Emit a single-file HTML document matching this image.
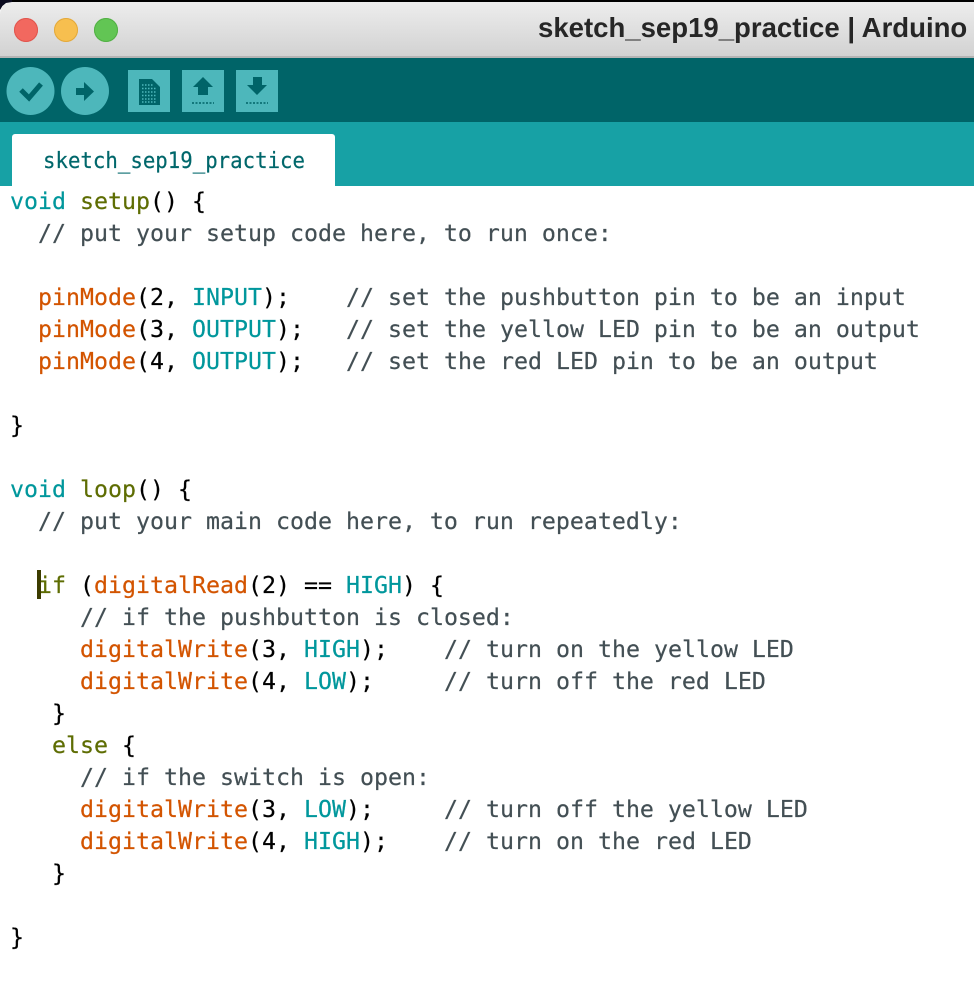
<!DOCTYPE html>
<html><head><meta charset="utf-8"><style>
html,body{margin:0;padding:0;background:#fff}
#w{position:relative;width:974px;height:992px;overflow:hidden;background:#fff}
.a{position:absolute}
#title{left:538px;top:12px;font:bold 27.55px/32px "Liberation Sans",sans-serif;color:#262626;white-space:pre}
#tab{left:43px;top:146px;font:22px/32px "DejaVu Sans Mono","Liberation Mono",monospace;color:#00676b;white-space:pre;-webkit-text-stroke:.2px #00676b;transform:scaleX(.942);transform-origin:0 0}
#code{left:10px;top:186px;font:23.25px/32px "DejaVu Sans Mono","Liberation Mono",monospace;color:#000;white-space:pre;margin:0;-webkit-text-stroke:.2px}
.k{color:#00979c}.s{color:#5e6d03}.f{color:#d35400}.c{color:#434f54}
</style></head><body><div id="w">
<div class="a" style="left:0;top:0;width:974px;height:2px;background:#000"></div>
<div class="a" style="left:0;top:2px;width:974px;height:54px;background:linear-gradient(#ededed,#d2d2d2);border-top-left-radius:12px"></div>
<div class="a" style="left:0;top:0;width:12px;height:10px;background:#0a0a1e;z-index:0;clip-path:polygon(0 0,100% 0,100% 20%,50% 30%,20% 60%,0 100%)"></div>
<div class="a" style="left:0;top:56px;width:974px;height:2px;background:#b4b4b4"></div>
<div class="a" style="left:14px;top:18px;width:24px;height:24px;border-radius:50%;background:#f2685f;box-shadow:inset 0 0 0 1px #e0564e"></div>
<div class="a" style="left:54px;top:18px;width:24px;height:24px;border-radius:50%;background:#f7bf4f;box-shadow:inset 0 0 0 1px #e3a93c"></div>
<div class="a" style="left:94px;top:18px;width:24px;height:24px;border-radius:50%;background:#62c554;box-shadow:inset 0 0 0 1px #52b045"></div>
<div class="a" id="title">sketch_sep19_practice | Arduino</div>
<div class="a" style="left:0;top:58px;width:974px;height:64px;background:#006468"></div>
<div class="a" style="left:0;top:122px;width:974px;height:64px;background:#17a1a5"></div>
<svg class="a" style="left:0;top:0" width="974" height="130" viewBox="0 0 974 130">
<circle cx="30.500" cy="91" r="24" fill="#4db7bb"/>
<circle cx="85" cy="91" r="24" fill="#4db7bb"/>
<path d="M21 90l8 8L41 84" fill="none" stroke="#006468" stroke-width="5"/>
<path d="M76 88h8v-6l10 9.500-10 9.500v-6h-8z" fill="#006468"/>
<rect x="128" y="70" width="42" height="42" fill="#4db7bb"/>
<rect x="182" y="70" width="42" height="42" fill="#4db7bb"/>
<rect x="236" y="70" width="42" height="42" fill="#4db7bb"/>
<path d="M139 79h13l8 8v18h-21z" fill="#006468"/>
<path d="M142 85h11M142 88.500h15M142 92h15M142 95.500h15M142 99h15M142 102h15" stroke="#4db7bb" stroke-width="1.500" stroke-dasharray="1.500 1.500" fill="none"/>
<path d="M203 77l10 10h-5v8h-10v-8h-5z" fill="#006468"/>
<path d="M192 103h22" stroke="#006468" stroke-width="1.500" stroke-dasharray="2 1.500"/>
<path d="M253 77h9v8h5l-10 10-10-10h6z" fill="#006468"/>
<path d="M246 103h22" stroke="#006468" stroke-width="1.500" stroke-dasharray="2 1.500"/>
</svg>
<div class="a" style="left:12px;top:134px;width:323px;height:52px;background:#fff;border-radius:3px 3px 0 0"></div>
<div class="a" id="tab">sketch_sep19_practice</div>
<pre class="a" id="code"><span class="k">void</span> <span class="s">setup</span>() {
  <span class="c">// put your setup code here, to run once:</span>

  <span class="f">pinMode</span>(2, <span class="k">INPUT</span>);    <span class="c">// set the pushbutton pin to be an input</span>
  <span class="f">pinMode</span>(3, <span class="k">OUTPUT</span>);   <span class="c">// set the yellow LED pin to be an output</span>
  <span class="f">pinMode</span>(4, <span class="k">OUTPUT</span>);   <span class="c">// set the red LED pin to be an output</span>

}

<span class="k">void</span> <span class="s">loop</span>() {
  <span class="c">// put your main code here, to run repeatedly:</span>

  <span class="s">if</span> (<span class="f">digitalRead</span>(2) == <span class="k">HIGH</span>) {
     <span class="c">// if the pushbutton is closed:</span>
     <span class="f">digitalWrite</span>(3, <span class="k">HIGH</span>);    <span class="c">// turn on the yellow LED</span>
     <span class="f">digitalWrite</span>(4, <span class="k">LOW</span>);     <span class="c">// turn off the red LED</span>
   }
   <span class="s">else</span> {
     <span class="c">// if the switch is open:</span>
     <span class="f">digitalWrite</span>(3, <span class="k">LOW</span>);     <span class="c">// turn off the yellow LED</span>
     <span class="f">digitalWrite</span>(4, <span class="k">HIGH</span>);    <span class="c">// turn on the red LED</span>
   }

}</pre>
<div class="a" style="left:37px;top:570px;width:4px;height:29px;background:#3c3c00"></div>
</div></body></html>
